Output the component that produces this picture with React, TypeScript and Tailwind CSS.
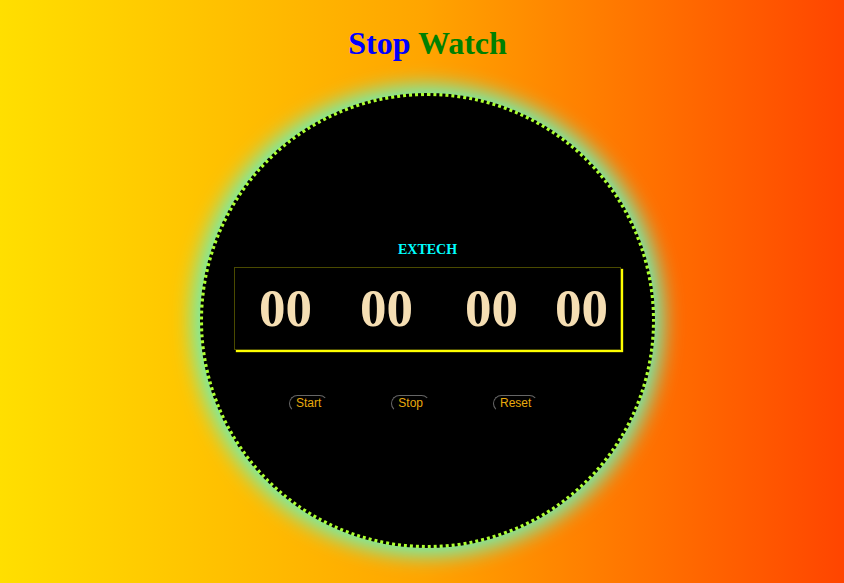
import React from "react";

const serif = "font-['Liberation_Serif','Times_New_Roman',serif]";
const sans = "font-['Liberation_Sans',Arial,sans-serif]";

const groups = [
  { id: "hr", value: "00", gap: "ml-[24px]" },
  { id: "min", value: "00", gap: "ml-[48px]" },
  { id: "sec", value: "00", gap: "ml-[52px]" },
  { id: "ms", value: "00", gap: "ml-[37px]" },
];

// Buttons do nothing here; only the face is drawn
const buttons = ["Start", "Stop", "Reset"];

export default function App() {
  return (
    <div className="min-h-screen w-full overflow-hidden bg-[linear-gradient(to_right,#ffdf00,#ffa500,#ff4500)] pl-[11px]">
      <h1
        className={`${serif} pt-[25px] text-center text-[32px] font-bold leading-[36px]`}>
        <span className="text-[#0000ff]">Stop</span>{" "}
        <span className="text-[#008000]">Watch</span>
      </h1>

      <div className="mx-auto mt-[32px] flex h-[455px] w-[455px] flex-col items-center rounded-full border-[3px] border-dotted border-[#adff2f] bg-black shadow-[0_0_20px_8px_#70f0b0]">
        <div
          className={`${serif} mt-[145px] text-[14px] font-bold leading-[18px] text-[#00ffff]`}>
          EXTECH
        </div>

        <div className="mt-[8px] flex h-[83px] w-[387px] border border-[#4a4a00] pt-[13px] shadow-[2px_2px_1px_#ffff00]">
          {groups.map((g) => (
            <span
              key={g.id}
              className={`${serif} ${g.gap} text-[53px] font-bold leading-[54px] text-[#f5deb3]`}>
              {g.value}
            </span>
          ))}
        </div>

        <div className="mt-[45px] flex w-full gap-[63px] pl-[86px]">
          {buttons.map((b) => (
            <button
              key={b}
              className={`${sans} rounded-[10px] border border-transparent border-l-[#666] border-t-[#666] bg-transparent px-[6px] text-[12px] leading-[15px] text-[#e8a90c]`}>
              {b}
            </button>
          ))}
        </div>
      </div>
    </div>
  );
}
